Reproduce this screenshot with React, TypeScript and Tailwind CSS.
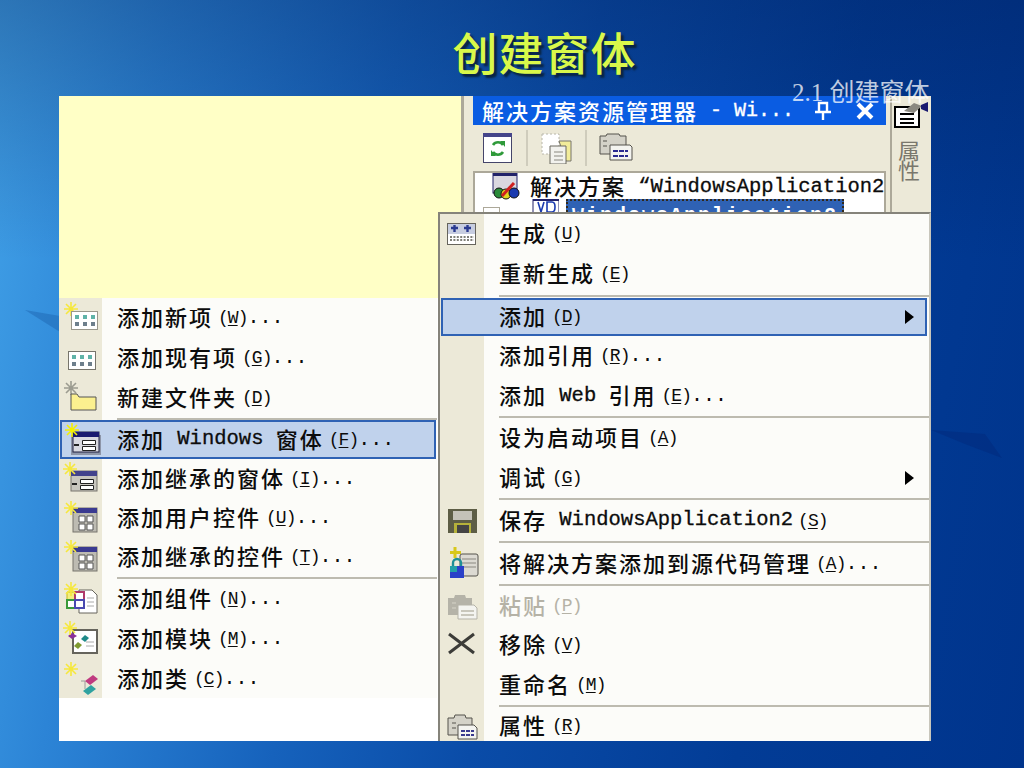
import React from "react";

function Label({ t, k, s, disabled }: { t: string; k?: string; s?: string; disabled?: boolean }) {
  const parts = t.trimEnd().split(/([\u4e00-\u9fff]+)/).filter(Boolean);
  return (
    <span className={`flex items-center whitespace-pre ${disabled ? "text-[#b5b2a6]" : "text-[#0c0c0c]"}`}>
      {parts.map((p, i) =>
        /[\u4e00-\u9fff]/.test(p) ? (
          <span key={i} className="relative -top-[2px] font-['Noto_Sans_CJK_SC',sans-serif] text-[22px] leading-none font-medium tracking-[2px]">{p}</span>
        ) : (
          <span key={i} className="font-['Liberation_Mono',monospace] text-[20.5px] leading-none [-webkit-text-stroke:0.3px]">{p}</span>
        )
      )}
      {k && (
        <span className="ml-[5px] font-['Liberation_Mono',monospace] text-[18px] leading-none tracking-[-1px]">
          (<span className="underline underline-offset-2">{k}</span>)
        </span>
      )}
      {s && <span className="font-['Liberation_Mono',monospace] text-[20px] leading-none">{s}</span>}
    </span>
  );
}

function Spark({ x = 0, y = 0, c = "#f6e83c" }: { x?: number; y?: number; c?: string }) {
  return (
    <g transform={`translate(${x} ${y})`} stroke={c} strokeWidth="1.6">
      <path d="M7 0V14M0 7H14M2 2L12 12M12 2L2 12" />
      <path d="M5 5h4v4H5z" fill={c} stroke="none" />
    </g>
  );
}

const Svg = ({ children }: { children: React.ReactNode }) => (
  <svg width="40" height="36" viewBox="0 0 40 36" className="shrink-0">{children}</svg>
);

const dots = (x: number, y: number) => (
  <g>
    {[0, 8, 16].map((a) => [0, 7].map((b) => (
      <rect key={`${a}${b}`} x={x + a} y={y + b} width="4" height="4" fill={b ? "#6d7f8c" : "#5fb3a8"} />
    )))}
  </g>
);

const IconNew = () => <Svg><Spark x={3} y={2} /><rect x="10.5" y="11.5" width="26" height="18" fill="#fff" stroke="#9a988c" />{dots(14, 15)}</Svg>;
const IconExisting = () => <Svg><rect x="7.5" y="11.5" width="27" height="18" fill="#fff" stroke="#77756c" />{dots(11, 15)}</Svg>;
const IconFolder = () => <Svg><Spark x={3} y={1} c="#9c9c90" /><path d="M10 14h6l2 3h17v13H10z" fill="#fbf08f" stroke="#555" /></Svg>;
const IconForm = ({ h }: { h?: boolean }) => (
  <Svg>
    {h && <rect x="8" y="13" width="30" height="20" fill="#8d95a8" />}
    <rect x="10" y="10" width="26" height="20" fill={h ? "#d9d9e0" : "#c8c6be"} stroke={h ? "#202040" : "#77756c"} />
    <rect x="10" y="10" width="26" height="5" fill={h ? "#1a1a70" : "#42428c"} />
    <path d="M11 23h5" stroke="#222" strokeWidth="2" />
    <path d="M19.5 18.5h13v4h-13zM19.5 24.5h13v4h-13z" fill="#fff" stroke="#222" />
    <Spark x={2} y={1} c={h ? "#f4f000" : "#f6e83c"} />
  </Svg>
);
const IconControl = () => (
  <Svg>
    <rect x="12" y="8" width="24" height="24" fill="#bdbbb2" stroke="#77756c" />
    <rect x="12" y="8" width="24" height="5" fill="#3a3a90" />
    <path d="M18 16h6v6h-6zM26 16h6v6h-6zM18 24h6v6h-6zM26 24h6v6h-6z" fill="#fff" stroke="#555" />
    <Spark x={3} y={1} />
  </Svg>
);
const IconComponent = () => (
  <Svg>
    <path d="M18 9h13l5 5v18H18z" fill="#fff" stroke="#66645c" />
    <path d="M26 17h7M26 21h7M26 25h7" stroke="#aaa" />
    <path d="M6 11h8v8H6z" fill="#f2ee80" stroke="#c8b820" />
    <path d="M14 11h9v8h-9z" fill="#fff" stroke="#b03a6a" strokeWidth="2" />
    <path d="M6 19h8v8H6z" fill="#fff" stroke="#3a9a3a" strokeWidth="2" />
    <path d="M14 19h9v8h-9z" fill="#fff" stroke="#4a4ab0" strokeWidth="2" />
    <Spark x={3} y={1} />
  </Svg>
);
const IconModule = () => (
  <Svg>
    <rect x="12" y="9" width="24" height="23" fill="#fff" stroke="#66645c" strokeWidth="2" />
    <path d="M25 21h8M25 25h8" stroke="#aaa" />
    <path d="M24 14l4 3-4 4-4-3z" fill="#1f8a88" />
    <path d="M17 21l4 3-4 4-4-3z" fill="#7f9a30" />
    <path d="M11 12l5 3-5 3-4-3z" fill="#8a2f9a" />
    <Spark x={2} y={0} />
  </Svg>
);
const IconClass = () => (
  <Svg>
    <path d="M20 20h4v8" stroke="#9a9a9a" fill="none" />
    <path d="M32 14l5 4-8 6-5-4z" fill="#c03a80" />
    <path d="M30 24l5 4-8 6-5-4z" fill="#2fa2a0" />
    <Spark x={3} y={1} />
  </Svg>
);
const IconBuild = () => (
  <Svg>
    <rect x="5.5" y="7.5" width="28" height="21" fill="#fff" stroke="#66645c" />
    <rect x="6" y="8" width="27" height="10" fill="#c7cde0" />
    <path d="M9 12h7M12.5 9v7M22 12h7M25.5 9v7" stroke="#2a3a90" strokeWidth="2.4" />
    <path d="M8 21h24M8 24h24" stroke="#55554c" strokeWidth="1.6" strokeDasharray="2 1.4" />
  </Svg>
);
const IconSave = () => (
  <Svg>
    <path d="M6 6h29v24H6z" fill="#5d5d45" />
    <rect x="11" y="8" width="19" height="9" fill="#c4c2b8" />
    <rect x="12" y="20" width="17" height="10" fill="#b5b13a" />
    <rect x="15" y="22" width="12" height="8" fill="#444" />
  </Svg>
);
const IconSource = () => (
  <Svg>
    <rect x="18" y="8" width="18" height="22" rx="2" fill="#dcdad2" stroke="#55534c" />
    <path d="M20 13h14M20 17h14M20 21h14" stroke="#8a8880" />
    <path d="M13 1v11M8 6.5h11" stroke="#d8c81a" strokeWidth="3" />
    <rect x="8" y="20" width="14" height="12" fill="#2a40c8" />
    <path d="M11 20v-3a4 4 0 0 1 8 0v3" fill="none" stroke="#1f8f96" strokeWidth="2.4" />
    <rect x="8" y="20" width="7" height="6" fill="#24a0a8" />
  </Svg>
);
const Clip = ({ c, l, dis }: { c: string; l: string; dis?: boolean }) => (
  <Svg>
    <path d="M6 10h6l1-3h10l1 3h6v17H6z" fill={c} stroke={dis ? "none" : "#55534c"} />
    <path d="M10 15h4M10 20h4" stroke={dis ? "#d6d4c8" : "#55534c"} />
    <path d="M16 17h16l3 3v11H16z" fill="#f4f4f0" stroke={dis ? "#b5b3a8" : "#55534c"} />
    <path d="M19 23h13M19 27h13" stroke={l} strokeWidth="2" strokeDasharray={dis ? "" : "4 1"} />
  </Svg>
);
const IconCut = () => (
  <Svg>
    <path d="M7 7l25 19M32 7L7 26" stroke="#3c3c38" strokeWidth="3" />
  </Svg>
);

type Row = { t?: string; k?: string; s?: string; icon?: React.ReactNode; h?: number; sep?: boolean; sel?: boolean; arrow?: boolean; dis?: boolean };

const leftRows: Row[] = [
  { t: "添加新项", k: "W", s: "...", icon: <IconNew />, h: 40 },
  { t: "添加现有项", k: "G", s: "...", icon: <IconExisting />, h: 40 },
  { t: "新建文件夹", k: "D", icon: <IconFolder />, h: 39 },
  { sep: true, h: 3 },
  { t: "添加 Windows 窗体", k: "F", s: "...", icon: <IconForm h />, sel: true, h: 39 },
  { t: "添加继承的窗体", k: "I", s: "...", icon: <IconForm />, h: 39 },
  { t: "添加用户控件", k: "U", s: "...", icon: <IconControl />, h: 39 },
  { t: "添加继承的控件", k: "T", s: "...", icon: <IconControl />, h: 40 },
  { sep: true, h: 2 },
  { t: "添加组件", k: "N", s: "...", icon: <IconComponent />, h: 40 },
  { t: "添加模块", k: "M", s: "...", icon: <IconModule />, h: 40 },
  { t: "添加类", k: "C", s: "...", icon: <IconClass />, h: 39 },
];

const rightRows: Row[] = [
  { t: "生成", k: "U", icon: <IconBuild />, h: 40 },
  { t: "重新生成", k: "E", h: 40 },
  { sep: true, h: 4 },
  { t: "添加", k: "D", sel: true, arrow: true, h: 38 },
  { t: "添加引用", k: "R", s: "...", h: 40 },
  { t: "添加 Web 引用", k: "E", s: "...", h: 40 },
  { sep: true, h: 2 },
  { t: "设为启动项目", k: "A", h: 40 },
  { t: "调试", k: "G", arrow: true, h: 40 },
  { sep: true, h: 2 },
  { t: "保存 WindowsApplication2", k: "S", icon: <IconSave />, h: 41 },
  { sep: true, h: 2 },
  { t: "将解决方案添加到源代码管理", k: "A", s: "...", icon: <IconSource />, h: 41 },
  { sep: true, h: 2 },
  { t: "粘贴", k: "P", icon: <Clip c="#b5b3a8" l="#c9c7bc" dis />, dis: true, h: 39 },
  { t: "移除", k: "V", icon: <IconCut />, h: 40 },
  { t: "重命名", k: "M", h: 40 },
  { sep: true, h: 2 },
  { t: "属性", k: "R", icon: <Clip c="#d4d2c8" l="#3a3a90" />, h: 38 },
];

function MenuRows({ rows, gutter, selClass }: { rows: Row[]; gutter: string; selClass: string }) {
  return (
    <>
      {rows.map((r, i) =>
        r.sep ? (
          <div key={i} className="flex shrink-0" style={{ height: r.h }}>
            <div className={`${gutter} shrink-0 bg-[#ece9d8]`} />
            <div className="ml-[15px] flex flex-1 items-center"><div className="h-[2px] w-full bg-[#bdbbb0]" /></div>
          </div>
        ) : (
          <div key={i} className="relative flex shrink-0" style={{ height: r.h }}>
            <div className={`${gutter} flex shrink-0 items-center justify-center bg-[#ece9d8]`}>{r.sel && r.icon ? null : r.icon}</div>
            {r.sel && (
              <div className={`absolute inset-y-0 left-[1px] flex items-center justify-start border-2 border-[#2f62b4] bg-[#c0d2ec] ${selClass}`}>
                {r.icon && <div className="flex w-[41px] items-center justify-center">{r.icon}</div>}
              </div>
            )}
            <div className="relative flex flex-1 items-center pl-[15px]">
              <Label t={r.t!} k={r.k} s={r.s} disabled={r.dis} />
              {r.arrow && <div className="absolute right-[15px] h-0 w-0 border-y-[7px] border-l-[9px] border-y-transparent border-l-black" />}
            </div>
          </div>
        )
      )}
    </>
  );
}

export default function App() {
  return (
    <div className="relative flex h-[768px] w-[1024px] flex-col overflow-hidden bg-[linear-gradient(100deg,#42a2e8_0%,#2c84d6_15%,#1662bc_35%,#0a4ca8_52%,#023c96_75%,#00348c_100%)]">
      <div className="absolute inset-x-0 top-0 h-[260px] bg-[linear-gradient(180deg,rgba(0,25,80,0.32),rgba(0,25,80,0))]" />
      <svg className="absolute inset-0" width="1024" height="768" viewBox="0 0 1024 768">
        <path d="M25 310L60 316 60 332z" fill="#1a5da8" opacity=".4" />
        <path d="M931 430L985 434 1002 458 965 444z" fill="#02297a" opacity=".45" />
      </svg>

      <header className="relative flex h-[96px] shrink-0 items-start justify-center pt-[22px] pl-[65px]">
        <h1 className="font-['Noto_Sans_CJK_SC',sans-serif] text-[45px] leading-[60px] font-medium tracking-[1px] text-[#d9f84a] [text-shadow:3px_3px_2px_#0a2440]">创建窗体</h1>
      </header>

      <main className="relative ml-[59px] flex h-[645px] w-[872px] shrink-0 flex-col bg-white">
        <section className="flex h-[202px] w-full shrink-0">
          <div className="w-[402px] shrink-0 bg-[#ffffc6]" />
          <div className="flex w-[12px] shrink-0 bg-[#ece9d8]">
            <div className="w-[3px] bg-[#aca899]" />
          </div>
          <div className="flex w-[413px] shrink-0 flex-col bg-[#ece9d8]">
            <div className="flex h-[29px] shrink-0 items-center bg-[#0a5ce2] pl-[9px] text-white">
              <span className="relative -top-[1px] font-['Noto_Sans_CJK_SC',sans-serif] text-[22px] leading-none font-medium tracking-[2px]">解决方案资源管理器</span>
              <span className="font-['Liberation_Mono',monospace] text-[20px] leading-none whitespace-pre [-webkit-text-stroke:0.3px]"> - Wi...</span>
              <svg width="20" height="20" viewBox="0 0 20 20" className="ml-[19px]"><path d="M6 2h8v9H6zM2 11h16M10 11v8" fill="none" stroke="#fff" strokeWidth="2.4" /></svg>
              <svg width="20" height="20" viewBox="0 0 20 20" className="ml-[22px]"><path d="M3 3l14 14M17 3L3 17" stroke="#fff" strokeWidth="4" /></svg>
            </div>
            <div className="flex h-[46px] shrink-0 items-center pl-[10px]">
              <svg width="30" height="32" viewBox="0 0 30 32">
                <rect x="0.5" y="1.5" width="28" height="29" fill="#fff" stroke="#45456a" />
                <rect x="0" y="1" width="29" height="4" fill="#45458a" />
                <path d="M10 13a6 6 0 0 1 10 0M20 20a6 6 0 0 1-10 0" fill="none" stroke="#2f9a3a" strokeWidth="2.6" />
                <path d="M17 9h5v6zM13 24H8v-6z" fill="#2f9a3a" />
              </svg>
              <div className="mx-[13px] h-[36px] w-[2px] bg-[#cfccbc]" />
              <svg width="32" height="32" viewBox="0 0 32 32">
                <path d="M1 2h17v20H1z" fill="#fff" stroke="#b8b6aa" strokeDasharray="2 2" />
                <path d="M18 9h12v20h-5z" fill="#f2ec9a" stroke="#77756c" />
                <path d="M9 14h16v18H9z" fill="#f2f2ee" stroke="#6a685e" />
                <path d="M13 20h9M13 24h9M13 28h9" stroke="#8a8880" />
              </svg>
              <div className="mx-[12px] h-[36px] w-[2px] bg-[#cfccbc]" />
              <svg width="34" height="30" viewBox="0 0 34 30">
                <path d="M1 3h6l1-2h12l1 2h6v18H1z" fill="#d4d2c8" stroke="#55534c" />
                <path d="M4 8h4M4 13h4" stroke="#55534c" />
                <path d="M11 12h20l2 2v13H11z" fill="#f4f4f0" stroke="#55534c" />
                <path d="M14 18h15M14 23h15" stroke="#2a2a90" strokeWidth="2" strokeDasharray="5 1" />
              </svg>
            </div>
            <div className="flex min-h-0 flex-1 flex-col overflow-hidden border-2 border-b-0 border-[#aca899] bg-white">
              <div className="flex h-[28px] shrink-0 items-center pl-[16px]">
                <svg width="30" height="30" viewBox="0 0 30 30" className="shrink-0">
                  <rect x="2" y="1" width="24" height="20" fill="#dad8e0" stroke="#22226a" />
                  <rect x="2" y="1" width="24" height="3" fill="#22226a" />
                  <circle cx="8" cy="21" r="5" fill="#2a8a3a" stroke="#111" />
                  <circle cx="15" cy="22" r="5" fill="#e0d820" stroke="#111" />
                  <circle cx="23" cy="21" r="5" fill="#1a3ab0" stroke="#111" />
                  <path d="M11 24L23 11" stroke="#d02020" strokeWidth="3" />
                </svg>
                <span className="ml-[9px]"><Label t="解决方案 “WindowsApplication2" /></span>
              </div>
              <div className="-mt-[2px] flex items-start pl-[8px]">
                <div className="mt-[8px] h-[12px] w-[17px] shrink-0 border border-[#aca899]" />
                <svg width="28" height="14" viewBox="0 0 28 14" className="ml-[31px] shrink-0">
                  <rect x="2" y="0" width="26" height="14" fill="#fff" stroke="#22226a" />
                  <rect x="2" y="0" width="26" height="2" fill="#22226a" />
                  <path d="M7 3l3 10 3-10M16 3v10h5q3 0 3-5t-3-5z" fill="none" stroke="#1a3ab0" strokeWidth="1.6" />
                </svg>
                <div className="ml-[7px] h-[40px] w-[278px] shrink-0 border-2 border-dotted border-[#33291a] bg-[#2f62b4] pt-[5px] pl-[4px] font-['Liberation_Mono',monospace] text-[20px] leading-none font-bold tracking-[2px] text-white">WindowsApplication2</div>
              </div>
            </div>
          </div>
          <div className="flex w-[45px] shrink-0 bg-[#ece9d8]">
            <div className="ml-[4px] w-[2px] bg-[#aca899]" />
            <div className="flex flex-1 flex-col items-center pt-[5px]">
              <svg width="38" height="28" viewBox="0 0 38 28">
                <rect x="2" y="6" width="24" height="20" fill="#fff" stroke="#000" strokeWidth="2" />
                <path d="M7 13h14M7 18h14M7 22h14" stroke="#000" strokeWidth="2" />
                <path d="M11 10l10-8 8 3-8 7z" fill="#8a8880" />
                <path d="M28 4l7-3v10l-7-3z" fill="#1a1a70" />
              </svg>
              <span className="mt-[10px] -ml-[5px] w-[22px] text-center font-['Noto_Sans_CJK_SC',sans-serif] text-[22px] leading-[20px] text-[#79776c]">属性</span>
            </div>
          </div>
        </section>

        <div className="absolute top-[202px] left-0 flex w-[378px] flex-col bg-[#fcfcf9]">
          <MenuRows rows={leftRows} gutter="w-[43px]" selClass="right-[1px]" />
        </div>

        <div className="absolute top-[116px] left-[379px] flex h-[529px] w-[493px] flex-col overflow-hidden border-t-2 border-r-2 border-l-2 border-t-[#85837a] border-r-[#c8c6bc] border-l-[#85837a] bg-[#fcfcf9]">
          <MenuRows rows={rightRows} gutter="w-[44px]" selClass="right-[2px]" />
        </div>
      </main>

      <span className="absolute top-[77px] left-[792px] font-['Liberation_Serif','Noto_Sans_CJK_SC',serif] text-[25px] leading-[32px] whitespace-pre text-white/75">2.1 创建窗体</span>
    </div>
  );
}
